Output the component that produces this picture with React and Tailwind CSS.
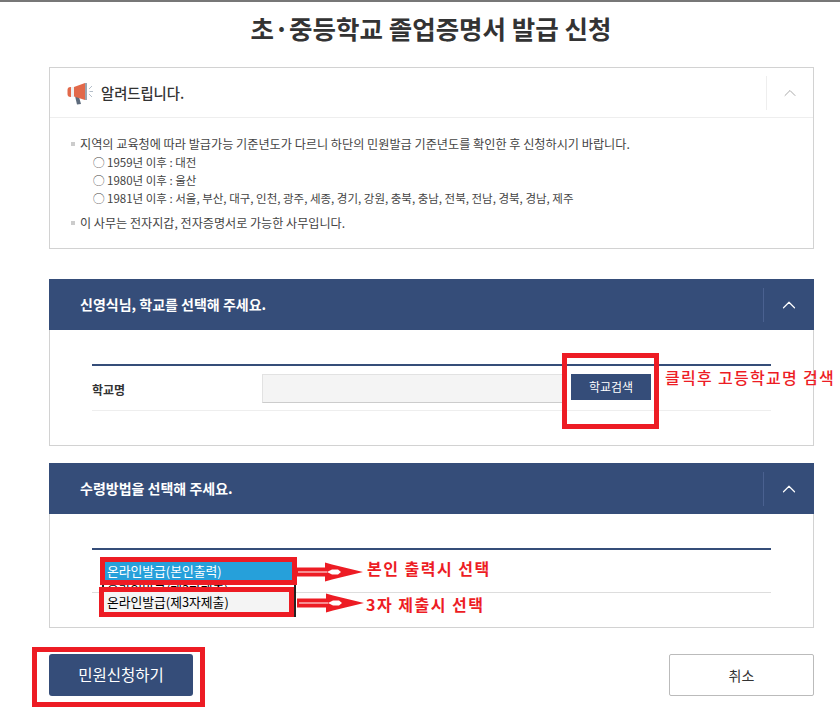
import { ChevronUp } from 'lucide-react';

function Megaphone() {
  return (
    <svg width="26" height="24" viewBox="0 0 26 24" className="shrink-0">
      <path d="M8 15l4 1 2 7-4 0.5z" fill="#5d6b7c" />
      <rect x="0.5" y="6" width="6" height="10" rx="3" fill="#e2694a" />
      <rect x="4" y="6" width="3" height="10" fill="#eef0f2" />
      <path d="M7 6l11-4v17L7 15.5z" fill="#e2694a" />
      <path d="M18 2h2v17h-2z" fill="#9aa5b1" />
      <path d="M22 8l3-3M22.500 10.500h3.500M22 13l3 3" stroke="#b4bec9" strokeWidth="1" fill="none" />
    </svg>
  );
}

function PanelHead({ title }) {
  return (
    <div className="flex h-[51px] items-center justify-between bg-[#354d79] pl-[31px]">
      <h2 className="text-[14px] font-bold text-white">{title}</h2>
      <div className="flex h-[34px] w-[51px] items-center justify-center border-l border-[#4a6190]">
        <ChevronUp className="ml-[-1px] h-[22px] w-[22px] text-white" strokeWidth={1.3} />
      </div>
    </div>
  );
}

function RedBox({ className }) {
  return <div className={`pointer-events-none absolute border-[5px] border-[#ed1c24] ${className}`} />;
}

function Arrow({ className }) {
  return (
    <svg width="70" height="20" viewBox="0 0 70 20" className={`absolute ${className}`}>
      <path d="M0 5.500H29V0.500L36 2.500L67 10L36 17.500L29 19.500V14.500H0z" fill="#ed1c24" />
      <path d="M2 9.500H31V10.500H2z" fill="#fff" />
      <path d="M31 10L36 7.500H42L45 10L42 12.500H36z" fill="#fff" />
    </svg>
  );
}

export default function App() {
  return (
    <div className="relative h-[723px] w-[840px] overflow-hidden bg-white font-['Noto_Sans_CJK_KR',sans-serif] text-[#333]">
      <div className="h-[2px] w-full bg-[#777]" />
      <h1 className="mt-[7px] h-[40px] pl-[22px] text-center text-[25.500px] leading-[38px] font-bold text-[#333]">초·중등학교 졸업증명서 발급 신청</h1>

      <div className="mx-[49px] mt-[18px] flex w-[765px] flex-col gap-[17px]">
        <section className="mb-[13px] h-[182px] border border-[#d2d2d2]">
          <div className="flex h-[50px] items-center justify-between border-b border-[#eee] pl-[17px]">
            <div className="flex items-center gap-[8px]">
              <Megaphone />
              <h2 className="text-[14.300px] font-medium text-[#333]">알려드립니다.</h2>
            </div>
            <div className="flex h-[34px] w-[47px] items-center justify-center border-l border-[#eee]">
              <ChevronUp className="h-[20px] w-[20px] text-[#aaa]" strokeWidth={1.2} />
            </div>
          </div>
          <div className="pt-[17px] pl-[21px] text-[11.500px] leading-[18px] text-[#444]">
            <p className="flex items-center gap-[5px] text-[12.150px]">
              <span className="h-[4px] w-[4px] bg-[#ccc]" />
              지역의 교육청에 따라 발급가능 기준년도가 다르니 하단의 민원발급 기준년도를 확인한 후 신청하시기 바랍니다.
            </p>
            <ul className="pl-[22px]">
              <li>◯ 1959년 이후 : 대전</li>
              <li>◯ 1980년 이후 : 울산</li>
              <li>◯ 1981년 이후 : 서울, 부산, 대구, 인천, 광주, 세종, 경기, 강원, 충북, 충남, 전북, 전남, 경북, 경남, 제주</li>
            </ul>
            <p className="mt-[7px] flex items-center gap-[5px] text-[12.100px]">
              <span className="h-[4px] w-[4px] bg-[#ccc]" />
              이 사무는 전자지갑, 전자증명서로 가능한 사무입니다.
            </p>
          </div>
        </section>

        <section className="h-[167px] border-x border-b border-[#d2d2d2]">
          <div className="mx-[-1px]"><PanelHead title="신영식님, 학교를 선택해 주세요." /></div>
          <div className="mx-[42px] mt-[34px] border-t-2 border-[#354d79]">
            <div className="flex h-[45px] items-start border-b border-[#eee] pt-[8px]">
              <span className="w-[170px] pt-[7px] text-[12px] font-bold text-[#333]">학교명</span>
              <div className="h-[29px] w-[301px] border border-[#e2e2e2] border-b-[#ccc] bg-[#f4f4f4]" />
              <button className="ml-[8px] h-[26px] w-[80px] bg-[#354d79] text-[12px] text-white">학교검색</button>
            </div>
          </div>
        </section>

        <section className="h-[165px] border-x border-b border-[#d2d2d2]">
          <div className="mx-[-1px]"><PanelHead title="수령방법을 선택해 주세요." /></div>
          <div className="mx-[42px] mt-[34px] h-[45px] border-t-2 border-b border-[#354d79] border-b-[#ddd]" />
        </section>

        <div className="mt-[9px] flex items-center justify-between">
          <button className="h-[42px] w-[144px] rounded-[3px] bg-[#354d79] text-[15.500px] text-white">민원신청하기</button>
          <button className="h-[42px] w-[145px] rounded-[2px] border border-[#bbb] bg-white text-[14px] text-[#333]">취소</button>
        </div>
      </div>

      {/* 펼쳐진 select 목록 */}
      <div className="absolute top-[558px] left-[102px] h-[59px] w-[194px] overflow-hidden border-x-2 border-[#222] bg-white text-[12.800px] leading-[19px] text-black">
        <div className="mt-[3px] bg-[#26a0da] pl-[3px] text-white">온라인발급(본인출력)</div>
        <div className="pl-[3px]">온라인발급(제3자제출)</div>
      </div>
      <div className="absolute top-[592px] left-[104px] h-[21px] w-[186px] bg-[#f4f4f4] pl-[3px] text-[12.800px] leading-[20px] text-black">온라인발급(제3자제출)</div>

      <RedBox className="top-[557px] left-[100px] h-[28px] w-[197px]" />
      <RedBox className="top-[587px] left-[99px] h-[30px] w-[195px]" />
      <RedBox className="top-[353px] left-[562px] h-[76px] w-[97px]" />
      <RedBox className="top-[647px] left-[32px] h-[60px] w-[173px]" />

      <Arrow className="top-[562px] left-[296px]" />
      <Arrow className="top-[593px] left-[297px]" />

      <span className="absolute top-[557px] left-[367px] text-[16px] leading-[22px] font-bold tracking-[1.500px] whitespace-nowrap text-[#ed1c24]">본인 출력시 선택</span>
      <span className="absolute top-[593px] left-[366px] text-[16px] leading-[22px] font-bold tracking-[1.500px] whitespace-nowrap text-[#ed1c24]">3자 제출시 선택</span>
      <span className="absolute top-[367px] left-[665px] text-[16px] leading-[20px] font-medium tracking-[1.300px] whitespace-nowrap text-[#ed1c24]">클릭후 고등학교명 검색</span>
    </div>
  );
}
